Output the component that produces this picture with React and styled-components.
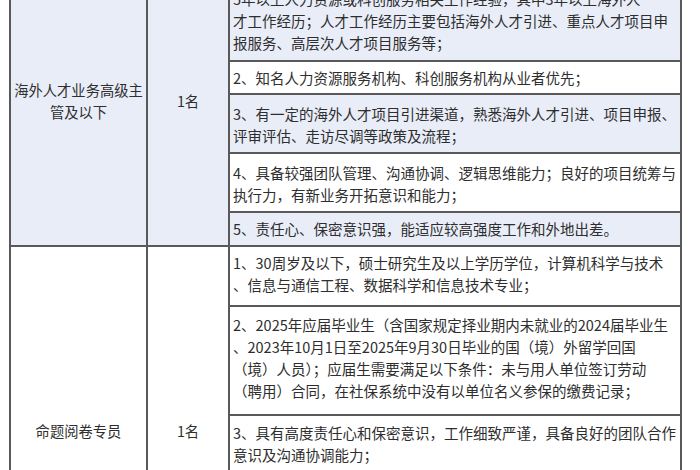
import React from "react";
import styled, { createGlobalStyle } from "styled-components";

const LINE = "#595959";
const SHADE = "#e9edf8";

const Global = createGlobalStyle`
  html, body {
    margin: 0;
    padding: 0;
    background: #ffffff;
    overflow: hidden;
  }
  body {
    font-family: "Noto Sans CJK SC", "Noto Sans", sans-serif;
    color: #2e2e2e;
  }
`;

const Page = styled.div`
  width: 700px;
  height: 470px;
  overflow: hidden;
`;

const Table = styled.div`
  width: 671px;
  margin: -42px 0 0 9px;
  border-left: 2px solid ${LINE};
  border-top: 2px solid ${LINE};
  font-size: 14.5px;
  line-height: 22px;
`;

const Group = styled.div`
  display: grid;
  grid-template-columns: 137px 82px 1fr;
  border-bottom: 2px solid ${LINE};
`;

const LabelCell = styled.div`
  display: flex;
  align-items: center;
  justify-content: center;
  text-align: center;
  font-size: 14.3px;
  padding: 0 0 4px;
  border-right: 2px solid ${LINE};
  background: ${(p) => (p.$shade ? SHADE : "#ffffff")};
`;

const Items = styled.div`
  display: flex;
  flex-direction: column;
  border-right: 2px solid ${LINE};
`;

const Item = styled.div`
  padding: ${(p) => p.$pt}px 2px ${(p) => p.$pb}px 3px;
  background: ${(p) => (p.$shade ? SHADE : "#ffffff")};
  & + & {
    border-top: 2px solid ${LINE};
  }
`;

const Line = styled.div`
  white-space: nowrap;
`;

const groups = [
  {
    title: "海外人才业务高级主管及以下",
    count: "1名",
    shade: true,
    items: [
      {
        shade: true,
        pad: [6, 6],
        lines: [
          "1、本科及以上学历，人力资源、工商管理、国际贸易等相关专业；",
          "5年以上人力资源或科创服务相关工作经验，其中3年以上海外人",
          "才工作经历；人才工作经历主要包括海外人才引进、重点人才项目申",
          "报服务、高层次人才项目服务等；",
        ],
      },
      {
        shade: false,
        pad: [5, 4],
        lines: ["2、知名人力资源服务机构、科创服务机构从业者优先；"],
      },
      {
        shade: true,
        pad: [8, 5],
        lines: [
          "3、有一定的海外人才项目引进渠道，熟悉海外人才引进、项目申报、",
          "评审评估、走访尽调等政策及流程；",
        ],
      },
      {
        shade: false,
        pad: [8, 5],
        lines: [
          "4、具备较强团队管理、沟通协调、逻辑思维能力；良好的项目统筹与",
          "执行力，有新业务开拓意识和能力；",
        ],
      },
      {
        shade: true,
        pad: [5, 5],
        lines: ["5、责任心、保密意识强，能适应较高强度工作和外地出差。"],
      },
    ],
  },
  {
    title: "命题阅卷专员",
    count: "1名",
    shade: false,
    items: [
      {
        shade: false,
        pad: [5, 9],
        lines: [
          "1、30周岁及以下，硕士研究生及以上学历学位，计算机科学与技术",
          "、信息与通信工程、数据科学和信息技术专业；",
        ],
      },
      {
        shade: false,
        pad: [7, 12],
        lines: [
          "2、2025年应届毕业生（含国家规定择业期内未就业的2024届毕业生",
          "、2023年10月1日至2025年9月30日毕业的国（境）外留学回国",
          "（境）人员）；应届生需要满足以下条件：未与用人单位签订劳动",
          "（聘用）合同，在社保系统中没有以单位名义参保的缴费记录；",
        ],
      },
      {
        shade: false,
        pad: [6, 6],
        lines: [
          "3、具有高度责任心和保密意识，工作细致严谨，具备良好的团队合作",
          "意识及沟通协调能力；",
        ],
      },
      {
        shade: false,
        pad: [6, 6],
        lines: [
          "4、熟悉考试命题、阅卷及题库建设等工作流程，具备较强的文字",
          "表达能力；",
        ],
      },
      {
        shade: false,
        pad: [6, 14],
        lines: [
          "5、有命题、阅卷或教育测评相关工作经验者优先，能熟练使用",
          "常用办公软件及数据分析工具，适应阶段性集中工作安排；",
          "6、身体健康，遵纪守法，无不良记录。",
        ],
      },
    ],
  },
];

export default function App() {
  return (
    <>
      <Global />
      <Page>
        <Table>
          {groups.map((g) => (
            <Group key={g.title}>
              <LabelCell $shade={g.shade}>{g.title}</LabelCell>
              <LabelCell $shade={g.shade}>{g.count}</LabelCell>
              <Items>
                {g.items.map((item, i) => (
                  <Item
                    key={i}
                    $shade={item.shade}
                    $pt={item.pad[0]}
                    $pb={item.pad[1]}
                  >
                    {item.lines.map((l, k) => (
                      <Line key={k}>{l}</Line>
                    ))}
                  </Item>
                ))}
              </Items>
            </Group>
          ))}
        </Table>
      </Page>
    </>
  );
}
